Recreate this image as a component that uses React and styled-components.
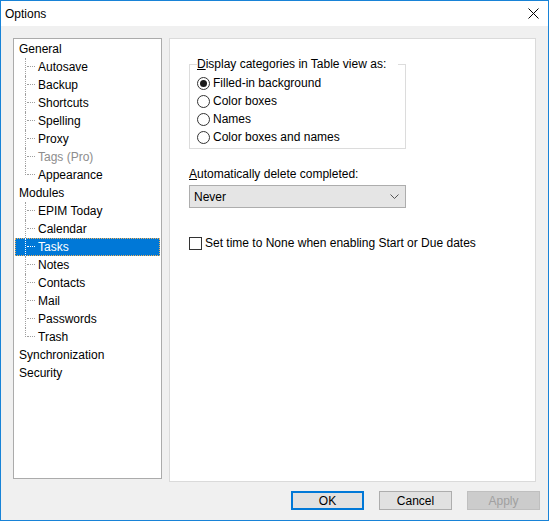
import React from "react";
import styled, { createGlobalStyle } from "styled-components";

const Global = createGlobalStyle`
  html, body { margin: 0; padding: 0; background: #f0f0f0; }
  body {
    font-family: "Liberation Sans", "Noto Sans", Arial, sans-serif;
    font-size: 12px;
    color: #000;
  }
`;

const Window = styled.div`
  width: 549px;
  height: 521px;
  box-sizing: border-box;
  border: 1px solid #1883d7;
  background: #f0f0f0;
  display: flex;
  flex-direction: column;
`;

const TitleBar = styled.div`
  height: 25px;
  background: #fff;
  display: flex;
  align-items: center;
  justify-content: space-between;
  padding: 0 9px 0 4px;
  font-size: 12px;
`;

const Body = styled.div`
  flex: 1;
  display: flex;
  flex-direction: column;
  padding: 12px 0 0 12px;
`;

const Panels = styled.div`
  display: flex;
  align-items: flex-start;
  gap: 7px;
`;

const TreePanel = styled.div`
  width: 149px;
  height: 441px;
  box-sizing: border-box;
  border: 1px solid #ababab;
  background: #fff;
  padding: 1px 1px 0 1px;
`;

const Row = styled.div`
  position: relative;
  height: 18px;
  line-height: 18px;
  display: flex;
  align-items: center;
  padding-left: ${(p) => (p.$child ? "23px" : "4px")};
  color: ${(p) => (p.$selected ? "#fff" : p.$disabled ? "#8d8d8d" : "#000")};
  background: ${(p) => (p.$selected ? "#0078d7" : "transparent")};
  outline: ${(p) => (p.$selected ? "1px dotted #f2b35c" : "none")};
  outline-offset: -1px;
  white-space: nowrap;
`;

const Connector = styled.span`
  position: absolute;
  left: 10px;
  top: 0;
  width: 9px;
  height: ${(p) => (p.$last ? "9px" : "18px")};
  border-left: 1px dotted ${(p) => (p.$selected ? "#fff" : "#a0a0a0")};
  &::after {
    content: "";
    position: absolute;
    left: 1px;
    top: 8px;
    width: 8px;
    border-top: 1px dotted ${(p) => (p.$selected ? "#fff" : "#a0a0a0")};
  }
`;

const ContentPanel = styled.div`
  width: 367px;
  height: 444px;
  box-sizing: border-box;
  border: 1px solid #dadada;
  background: #fff;
  padding: 16px 0 0 19px;
`;

const GroupBox = styled.fieldset`
  width: 217px;
  min-width: 0;
  box-sizing: border-box;
  margin: 0;
  border: 1px solid #dcdcdc;
  padding: 1px 0 2px 7px;
`;

const Legend = styled.legend`
  padding: 0 12px 0 0;
  margin-left: 0;
  line-height: 18px;
  height: 18px;
  white-space: nowrap;
`;

const OptionRow = styled.label`
  display: flex;
  align-items: center;
  height: 18px;
  gap: 3px;
  white-space: nowrap;
`;

const RadioCircle = styled.span`
  flex: none;
  width: 13px;
  height: 13px;
  box-sizing: border-box;
  border: 1px solid #333;
  border-radius: 50%;
  background: #fff;
  display: flex;
  align-items: center;
  justify-content: center;
  &::after {
    content: "";
    width: 7px;
    height: 7px;
    border-radius: 50%;
    background: ${(p) => (p.$checked ? "#1a1a1a" : "transparent")};
  }
`;

const FieldLabel = styled.div`
  margin-top: 16px;
  height: 18px;
  line-height: 18px;
`;

const Select = styled.div`
  margin-top: 2px;
  width: 217px;
  height: 23px;
  box-sizing: border-box;
  border: 1px solid #adadad;
  background: #e5e5e5;
  display: flex;
  align-items: center;
  justify-content: space-between;
  padding: 0 6px 0 4px;
`;

const CheckRow = styled.label`
  margin-top: 26px;
  display: flex;
  align-items: center;
  height: 18px;
  gap: 3px;
  white-space: nowrap;
`;

const CheckBox = styled.span`
  flex: none;
  width: 13px;
  height: 13px;
  box-sizing: border-box;
  border: 1px solid #333;
  background: #fff;
`;

const Footer = styled.div`
  display: flex;
  justify-content: flex-end;
  gap: 15px;
  padding: 9px 8px 0 0;
`;

const Button = styled.div`
  width: 73px;
  height: 19px;
  box-sizing: border-box;
  display: flex;
  align-items: center;
  justify-content: center;
  background: ${(p) => (p.$disabled ? "#cccccc" : "#e1e1e1")};
  border: ${(p) =>
    p.$default ? "2px solid #0078d7" : p.$disabled ? "1px solid #bfbfbf" : "1px solid #adadad"};
  color: ${(p) => (p.$disabled ? "#a0a0a0" : "#000")};
`;

const tree = [
  { label: "General" },
  { label: "Autosave", child: true },
  { label: "Backup", child: true },
  { label: "Shortcuts", child: true },
  { label: "Spelling", child: true },
  { label: "Proxy", child: true },
  { label: "Tags (Pro)", child: true, disabled: true },
  { label: "Appearance", child: true, last: true },
  { label: "Modules" },
  { label: "EPIM Today", child: true },
  { label: "Calendar", child: true },
  { label: "Tasks", child: true, selected: true },
  { label: "Notes", child: true },
  { label: "Contacts", child: true },
  { label: "Mail", child: true },
  { label: "Passwords", child: true },
  { label: "Trash", child: true, last: true },
  { label: "Synchronization" },
  { label: "Security" },
];

const radios = ["Filled-in background", "Color boxes", "Names", "Color boxes and names"];

export default function App() {
  return (
    <>
      <Global />
      <Window>
        <TitleBar>
          <span>Options</span>
          <svg width="11" height="11" viewBox="0 0 11 11">
            <path d="M0.5 0.5 L10.5 10.5 M10.5 0.5 L0.5 10.5" stroke="#000" strokeWidth="1" />
          </svg>
        </TitleBar>
        <Body>
          <Panels>
            <TreePanel>
              {tree.map((t) => (
                <Row key={t.label} $child={t.child} $selected={t.selected} $disabled={t.disabled}>
                  {t.child && <Connector $last={t.last} $selected={t.selected} />}
                  {t.label}
                </Row>
              ))}
            </TreePanel>
            <ContentPanel>
              <GroupBox>
                <Legend>
                  <u>D</u>isplay categories in Table view as:
                </Legend>
                {radios.map((r, i) => (
                  <OptionRow key={r}>
                    <RadioCircle $checked={i === 0} />
                    {r}
                  </OptionRow>
                ))}
              </GroupBox>
              <FieldLabel>
                <u>A</u>utomatically delete completed:
              </FieldLabel>
              <Select>
                <span>Never</span>
                <svg width="9" height="5" viewBox="0 0 9 5">
                  <path d="M0.5 0.5 L4.5 4.5 L8.5 0.5" stroke="#555" fill="none" strokeWidth="1" />
                </svg>
              </Select>
              <CheckRow>
                <CheckBox />
                Set time to None when enabling Start or Due dates
              </CheckRow>
            </ContentPanel>
          </Panels>
          <Footer>
            <Button $default>OK</Button>
            <Button>Cancel</Button>
            <Button $disabled>Apply</Button>
          </Footer>
        </Body>
      </Window>
    </>
  );
}
